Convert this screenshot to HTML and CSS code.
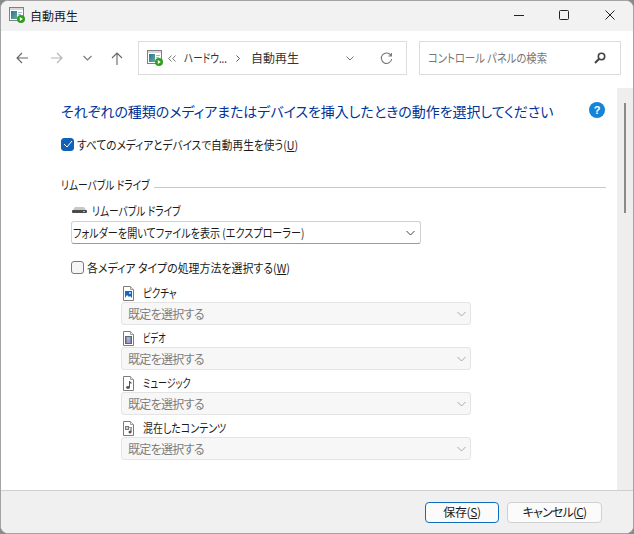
FILE: index.html
```html
<!DOCTYPE html>
<html lang="ja">
<head>
    <meta charset="UTF-8">
    <title>自動再生</title>
    <link rel="stylesheet" href="styles.css">
</head>
<body>
    <svg class="defs" width="0" height="0">
        <defs>
            <linearGradient id="picFill" x1="0" y1="0" x2="1" y2="1">
                <stop offset="0" stop-color="#2f6fa8"/>
                <stop offset="1" stop-color="#5fae8a"/>
            </linearGradient>
        </defs>
        <symbol id="appIcon" viewBox="0 0 16 16">
            <rect x="0.5" y="0.5" width="14" height="13" fill="#fff" stroke="#808080"/>
            <rect x="1" y="1" width="13" height="2" fill="#d8d8d8"/>
            <rect x="2" y="4" width="6" height="8" fill="url(#picFill)"/>
            <rect x="9" y="5" width="4" height="1" fill="#a9b8c9"/>
            <rect x="9" y="7" width="3" height="1" fill="#a9b8c9"/>
            <circle cx="12" cy="12" r="4" fill="#2f9e1f"/>
            <path d="M10.8 10v4l3-2z" fill="#fff"/>
        </symbol>
        <symbol id="docIcon" viewBox="0 0 11 15">
            <path d="M.5.5h7l3 3v11H.5z" fill="#fff" stroke="#7c7c7c"/>
            <path d="M7.5.5v3h3" fill="#e8e8e8" stroke="#a0a0a0"/>
        </symbol>
    </svg>
    <div class="window">
        <div class="titlebar">
            <svg class="icon16 title-icon"><use href="#appIcon"/></svg>
            <span class="title-text">自動再生</span>
            <div class="win-buttons">
                <svg width="10" height="10" viewBox="0 0 10 10"><path d="M0 5.5h10" stroke="#222" fill="none"/></svg>
                <svg width="10" height="10" viewBox="0 0 10 10"><rect x="0.5" y="0.5" width="9" height="9" rx="1" stroke="#222" fill="none"/></svg>
                <svg class="win-close" width="10" height="10" viewBox="0 0 10 10"><path d="M.5.5l9 9M9.5.5l-9 9" stroke="#222" fill="none"/></svg>
            </div>
        </div>
        <div class="navbar">
            <div class="nav-arrows">
                <svg width="12" height="12" viewBox="0 0 12 12"><path d="M12 6H1M6 1L1 6l5 5" stroke="#666" stroke-width="1.1" fill="none"/></svg>
                <svg width="12" height="12" viewBox="0 0 12 12"><path d="M0 6h11M6 1l5 5-5 5" stroke="#b4b4b4" stroke-width="1.1" fill="none"/></svg>
                <svg width="9" height="6" viewBox="0 0 9 6"><path d="M.5 1l4 4 4-4" stroke="#777" stroke-width="1.1" fill="none"/></svg>
                <svg width="12" height="13" viewBox="0 0 12 13"><path d="M6 13V1M1 6l5-5 5 5" stroke="#666" stroke-width="1.1" fill="none"/></svg>
            </div>
            <div class="address">
                <svg class="icon16"><use href="#appIcon"/></svg>
                <svg class="crumb-more" width="8" height="7" viewBox="0 0 8 7"><path d="M3.5.5L.7 3.5l2.8 3M7.5.5L4.7 3.5l2.8 3" stroke="#777" fill="none"/></svg>
                <span class="crumb crumb-hw"><span class="narrow sx-80">ハードウ...</span></span>
                <svg class="crumb-sep" width="4" height="7" viewBox="0 0 4 7"><path d="M.5.5l3 3-3 3" stroke="#555" fill="none"/></svg>
                <span class="crumb crumb-auto">自動再生</span>
                <svg class="addr-chevron" width="8" height="5" viewBox="0 0 8 5"><path d="M.5.5L4 4 7.5.5" stroke="#777" fill="none"/></svg>
                <svg class="addr-refresh" width="13" height="13" viewBox="0 0 13 13"><path d="M11 3.5A5.2 5.2 0 1 0 11.7 7M11.4 1v3h-3" stroke="#777" stroke-width="1.1" fill="none"/></svg>
            </div>
            <div class="search">
                <span class="search-text narrow sx-86">コントロール パネルの検索</span>
                <svg width="12" height="12" viewBox="0 0 12 12"><circle cx="7.5" cy="4.5" r="3.2" stroke="#444" stroke-width="1.6" fill="none"/><path d="M5.2 6.8L1 11" stroke="#444" stroke-width="2"/></svg>
            </div>
        </div>
        <div class="middle">
            <div class="content">
                <div class="heading-row">
                    <h1>それぞれの種類のメディアまたはデバイスを挿入したときの動作を選択してください</h1>
                    <span class="help">?</span>
                </div>
                <label class="check-row main-check">
                    <span class="check checked">
                        <svg width="10" height="8" viewBox="0 0 10 8"><path d="M1 4l3 3 5-6" stroke="#fff" fill="none"/></svg>
                    </span>
                    <span class="narrow sx-89">すべてのメディアとデバイスで自動再生を使う(<u>U</u>)</span>
                </label>
                <div class="group-title">
                    <span class="group-name"><span class="narrow sx-81">リムーバブル ドライブ</span></span>
                    <div class="group-line"></div>
                </div>
                <div class="drive">
                    <div class="drive-label">
                        <svg width="15" height="8" viewBox="0 0 15 8"><path d="M1 4l2-3h9l2 3z" fill="#c8c8c8"/><rect y="4" width="15" height="3" rx="1" fill="#4a4a4a"/><rect x="11" y="5" width="2" height="1" fill="#8fd07f"/></svg>
                        <span class="narrow sx-81">リムーバブル ドライブ</span>
                    </div>
                    <div class="select drive-select">
                        <span class="narrow sx-84">フォルダーを開いてファイルを表示 (エクスプローラー)</span>
                        <svg width="9" height="6" viewBox="0 0 9 6"><path d="M.5 1l4 4 4-4" stroke="#444" fill="none"/></svg>
                    </div>
                </div>
                <label class="check-row media-check">
                    <span class="check"></span>
                    <span class="narrow sx-91">各メディア タイプの処理方法を選択する(<u>W</u>)</span>
                </label>
                <div class="media-list">
                    <div class="media-item">
                        <div class="media-label">
                            <span class="doc"><svg class="doc-icon"><use href="#docIcon"/></svg><svg class="doc-mark" width="7" height="7" viewBox="0 0 7 7"><rect width="7" height="7" fill="#1466c0"/><path d="M0 7l2-3 2 2 1-1 2 2z" fill="#fff"/><rect x="4" y="1" width="2" height="2" fill="#8fc4f0"/></svg></span>
                            <span class="narrow sx-79">ピクチャ</span>
                        </div>
                        <div class="select disabled"><span>既定を選択する</span><svg width="9" height="6" viewBox="0 0 9 6"><path d="M.5 1l4 4 4-4" stroke="#a8a8a8" fill="none"/></svg></div>
                    </div>
                    <div class="media-item">
                        <div class="media-label">
                            <span class="doc"><svg class="doc-icon"><use href="#docIcon"/></svg><svg class="doc-mark" width="7" height="8" viewBox="0 0 7 8"><rect width="7" height="8" fill="#666"/><rect x="1.5" y="1" width="4" height="3" fill="#7fc4e8"/><rect x="1.5" y="4" width="4" height="3" fill="#a898e0"/></svg></span>
                            <span class="narrow sx-68">ビデオ</span>
                        </div>
                        <div class="select disabled"><span>既定を選択する</span><svg width="9" height="6" viewBox="0 0 9 6"><path d="M.5 1l4 4 4-4" stroke="#a8a8a8" fill="none"/></svg></div>
                    </div>
                    <div class="media-item">
                        <div class="media-label">
                            <span class="doc"><svg class="doc-icon"><use href="#docIcon"/></svg><svg class="doc-mark" width="7" height="8" viewBox="0 0 7 8"><path d="M4.5 0v6.5" stroke="#555"/><ellipse cx="3" cy="6.5" rx="1.9" ry="1.4" fill="#555"/><path d="M4.5 0l2 1.5V3l-2-1.2z" fill="#555"/></svg></span>
                            <span class="narrow sx-75">ミュージック</span>
                        </div>
                        <div class="select disabled"><span>既定を選択する</span><svg width="9" height="6" viewBox="0 0 9 6"><path d="M.5 1l4 4 4-4" stroke="#a8a8a8" fill="none"/></svg></div>
                    </div>
                    <div class="media-item">
                        <div class="media-label">
                            <span class="doc"><svg class="doc-icon"><use href="#docIcon"/></svg><svg class="doc-mark" width="8" height="8" viewBox="0 0 8 8"><rect width="4" height="4" fill="#777"/><rect x="1" y="1" width="2" height="2" fill="#c8d4dc"/><path d="M6 2v4" stroke="#555"/><circle cx="5" cy="6" r="1.5" fill="#555"/><rect x="4" y="1" width="3" height="1" fill="#999"/></svg></span>
                            <span class="narrow sx-83">混在したコンテンツ</span>
                        </div>
                        <div class="select disabled"><span>既定を選択する</span><svg width="9" height="6" viewBox="0 0 9 6"><path d="M.5 1l4 4 4-4" stroke="#a8a8a8" fill="none"/></svg></div>
                    </div>
                </div>
            </div>
            <div class="scrollbar"><div class="thumb"></div></div>
        </div>
        <div class="footer">
            <button class="btn primary">保存(<u>S</u>)</button>
            <button class="btn cancel">キャンセル(<u>C</u>)</button>
        </div>
    </div>
</body>
</html>
```

FILE: styles.css
```css
* {
    box-sizing: border-box;
}
html, body {
    margin: 0;
    height: 100%;
    background: #8a8a8a;
}
body {
    font-family: "Noto Sans CJK JP", "Noto Sans", sans-serif;
    font-size: 12px;
    font-feature-settings: "palt";
    color: #1a1a1a;
    overflow: hidden;
}
.defs {
    position: absolute;
}
/* the screenshot font has much narrower kana than Noto */
.narrow {
    display: inline-block;
    white-space: nowrap;
    transform-origin: left center;
}
.sx-68 { transform: scaleX(0.68); }
.sx-75 { transform: scaleX(0.75); }
.sx-79 { transform: scaleX(0.79); }
.sx-80 { transform: scaleX(0.8); }
.sx-81 { transform: scaleX(0.81); }
.sx-83 { transform: scaleX(0.83); }
.sx-84 { transform: scaleX(0.84); }
.sx-86 { transform: scaleX(0.86); }
.sx-89 { transform: scaleX(0.89); }
.sx-91 { transform: scaleX(0.91); }
.window {
    height: 534px;
    display: flex;
    flex-direction: column;
    background: #fff;
    border: 1px solid #a3a3a3;
    border-radius: 8px;
    overflow: hidden;
}
.icon16 {
    width: 16px;
    height: 16px;
    flex: none;
}
.titlebar {
    height: 30px;
    flex: none;
    display: flex;
    align-items: center;
    background: #f2f2f2;
    padding: 0 0 2px 8px;
}
.title-text {
    margin-left: 5px;
}
.win-buttons {
    margin-left: auto;
    display: flex;
    gap: 35px;
    padding-right: 18px;
}
.win-close {
    margin-left: 1px;
}
.navbar {
    height: 57px;
    flex: none;
    display: flex;
    align-items: center;
    padding-bottom: 3px;
}
.nav-arrows {
    width: 137px;
    padding-left: 15px;
    display: flex;
    align-items: center;
}
.nav-arrows svg:nth-child(2) {
    margin-left: 23px;
}
.nav-arrows svg:nth-child(3) {
    margin-left: 20px;
}
.nav-arrows svg:nth-child(4) {
    margin-left: 19px;
}
.address {
    width: 269px;
    height: 34px;
    border: 1px solid #dcdcdc;
    display: flex;
    align-items: center;
    padding-left: 8px;
    color: #333;
}
.crumb-more {
    margin-left: 5px;
    flex: none;
}
.crumb {
    margin-left: 8px;
    margin-bottom: 2px;
    flex: none;
}
.crumb-hw {
    width: 43px;
}
.crumb-sep {
    margin-left: 9px;
    flex: none;
}
.crumb-auto {
    margin-left: 11px;
}
.addr-chevron {
    margin-left: auto;
}
.addr-refresh {
    margin-left: 26px;
    margin-right: 13px;
}
.search {
    width: 202px;
    height: 34px;
    margin-left: 12px;
    border: 1px solid #dcdcdc;
    display: flex;
    align-items: center;
    justify-content: space-between;
    padding: 0 14px 0 8px;
}
.search-text {
    color: #767676;
    width: 119px;
    margin-bottom: 2px;
}
.middle {
    flex: 1;
    display: flex;
    min-height: 0;
}
.content {
    flex: 1;
    padding: 0 11px 0 60px;
}
.heading-row {
    display: flex;
    align-items: center;
    justify-content: space-between;
    height: 24px;
    margin-top: 11px;
    padding-right: 1px;
}
h1 {
    margin: 0;
    font-size: 14px;
    font-weight: 400;
    letter-spacing: -0.05px;
    color: #003399;
    white-space: nowrap;
}
.help {
    width: 16px;
    height: 16px;
    margin-top: -2px;
    border-radius: 50%;
    background: #1583d8;
    color: #fff;
    font-size: 11px;
    font-weight: 700;
    display: flex;
    align-items: center;
    justify-content: center;
    font-family: "Liberation Sans", sans-serif;
}
.check-row {
    display: flex;
    align-items: center;
    gap: 3px;
}
.check {
    width: 13px;
    height: 13px;
    flex: none;
    border-radius: 3px;
    border: 1px solid #7a7a7a;
    background: #f6f6f6;
    display: flex;
    align-items: center;
    justify-content: center;
}
.check.checked {
    background: #0f62b8;
    border-color: #0f62b8;
}
.main-check {
    margin-top: 12px;
    height: 18px;
}
.group-title {
    margin-top: 22px;
    height: 18px;
    display: flex;
    align-items: center;
    gap: 3px;
}
.group-name {
    width: 90px;
    flex: none;
}
.group-line {
    flex: 1;
    height: 1px;
    margin-top: 6px;
    background: #c8c8c8;
}
.drive {
    margin-left: 10px;
    margin-top: 8px;
    width: 350px;
}
.drive-label {
    display: flex;
    align-items: center;
    gap: 5px;
    height: 18px;
    padding-left: 1px;
}
.select {
    display: flex;
    align-items: center;
    justify-content: space-between;
    padding: 0 5px 0 1px;
    border-radius: 3px;
    border: 1px solid #d0d0d0;
    border-bottom-color: #9a9a9a;
    background: #fff;
}
.select svg {
    flex: none;
}
.drive-select {
    height: 23px;
    margin-top: 2px;
}
.media-check {
    margin-left: 10px;
    margin-top: 14px;
    height: 18px;
}
.media-list {
    margin-left: 60px;
    margin-top: 6px;
    width: 350px;
}
.media-item {
    margin-bottom: 2px;
}
.media-label {
    display: flex;
    align-items: center;
    height: 20px;
    gap: 9px;
    padding-left: 2px;
}
.doc {
    position: relative;
    width: 11px;
    height: 15px;
    margin-top: 2px;
    display: block;
}
.doc-icon {
    width: 11px;
    height: 15px;
    display: block;
}
.doc-mark {
    position: absolute;
    left: 2px;
    top: 5px;
}
.select.disabled {
    height: 23px;
    padding: 0 4px 0 6px;
    background: #f7f7f7;
    border-color: #e4e4e4;
    color: #7d7d7d;
    letter-spacing: -0.7px;
}
.scrollbar {
    width: 16px;
    flex: none;
    background: #eeeeee;
    padding: 15px 0 0 7px;
}
.thumb {
    width: 2px;
    height: 110px;
    background: #8a8a8a;
}
.footer {
    height: 43px;
    flex: none;
    display: flex;
    justify-content: flex-end;
    align-items: center;
    gap: 8px;
    padding: 0 31px 0 0;
    background: #f0f0f0;
    border-top: 1px solid #d0d0d0;
}
.btn {
    height: 21px;
    font: inherit;
    font-feature-settings: "palt";
    color: #1a1a1a;
    background: #fbfbfb;
    border: 1px solid #d0d0d0;
    border-radius: 4px;
    padding: 0 0 2px;
}
.btn.primary {
    width: 74px;
    border-color: #0f6cbd;
    letter-spacing: -0.4px;
}
.btn.cancel {
    width: 95px;
    letter-spacing: -0.8px;
}
```
